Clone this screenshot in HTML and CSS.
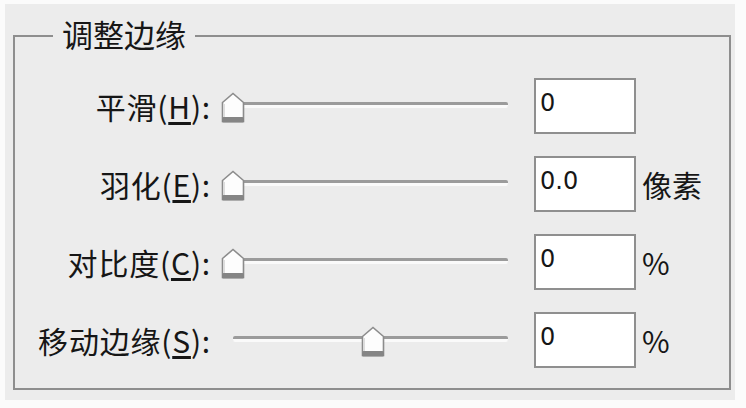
FILE: index.html
```html
<!DOCTYPE html>
<html lang="zh-CN">
<head>
<meta charset="utf-8">
<title>调整边缘</title>
<link rel="stylesheet" href="styles.css">
</head>
<body>
<div class="dialog">
  <fieldset class="group">
    <legend class="group-title">调整边缘</legend>
    <div class="rows">
      <div class="row">
        <label class="label">平滑(<u>H</u>):</label>
        <div class="slider">
          <div class="rail">
            <div class="track"></div>
            <svg class="thumb" style="left:0%" width="24" height="31" viewBox="0 0 24 31"><path d="M1.5 10.5 L12 1.5 L22.5 10.5 L22.5 29.5 L1.5 29.5 Z" fill="#fdfdfd" stroke="#8c8c8c" stroke-width="1.6"/><path d="M3.2 12 L3.2 25" stroke="#dcdcdc" stroke-width="1.5"/><rect x="1" y="25" width="22" height="5.5" rx="1.5" fill="#858585"/></svg>
          </div>
        </div>
        <div class="field">0</div>
        <span class="unit"></span>
      </div>
      <div class="row">
        <label class="label">羽化(<u>E</u>):</label>
        <div class="slider">
          <div class="rail">
            <div class="track"></div>
            <svg class="thumb" style="left:0%" width="24" height="31" viewBox="0 0 24 31"><path d="M1.5 10.5 L12 1.5 L22.5 10.5 L22.5 29.5 L1.5 29.5 Z" fill="#fdfdfd" stroke="#8c8c8c" stroke-width="1.6"/><path d="M3.2 12 L3.2 25" stroke="#dcdcdc" stroke-width="1.5"/><rect x="1" y="25" width="22" height="5.5" rx="1.5" fill="#858585"/></svg>
          </div>
        </div>
        <div class="field">0.0</div>
        <span class="unit">像素</span>
      </div>
      <div class="row">
        <label class="label">对比度(<u>C</u>):</label>
        <div class="slider">
          <div class="rail">
            <div class="track"></div>
            <svg class="thumb" style="left:0%" width="24" height="31" viewBox="0 0 24 31"><path d="M1.5 10.5 L12 1.5 L22.5 10.5 L22.5 29.5 L1.5 29.5 Z" fill="#fdfdfd" stroke="#8c8c8c" stroke-width="1.6"/><path d="M3.2 12 L3.2 25" stroke="#dcdcdc" stroke-width="1.5"/><rect x="1" y="25" width="22" height="5.5" rx="1.5" fill="#858585"/></svg>
          </div>
        </div>
        <div class="field">0</div>
        <span class="unit">%</span>
      </div>
      <div class="row">
        <label class="label">移动边缘(<u>S</u>):</label>
        <div class="slider">
          <div class="rail">
            <div class="track"></div>
            <svg class="thumb" style="left:51%" width="24" height="31" viewBox="0 0 24 31"><path d="M1.5 10.5 L12 1.5 L22.5 10.5 L22.5 29.5 L1.5 29.5 Z" fill="#fdfdfd" stroke="#8c8c8c" stroke-width="1.6"/><path d="M3.2 12 L3.2 25" stroke="#dcdcdc" stroke-width="1.5"/><rect x="1" y="25" width="22" height="5.5" rx="1.5" fill="#858585"/></svg>
          </div>
        </div>
        <div class="field">0</div>
        <span class="unit">%</span>
      </div>
    </div>
  </fieldset>
</div>
</body>
</html>
```

FILE: styles.css
```css
html, body {
  margin: 0;
  padding: 0;
  background: #fbfbfb;
}

body {
  padding: 4px 11px 8px 5px;
  font-family: "Noto Sans CJK SC", "Noto Sans", sans-serif;
  color: #161616;
}

.dialog {
  background: #ececec;
  height: 396px;
  padding: 12px 4px 0 8px;
  box-sizing: border-box;
}

.group {
  margin: 0;
  padding: 22px 0 0 0;
  border: 2px solid #8e8e8e;
  height: 374px;
  box-sizing: border-box;
  min-width: 0;
}

.group-title {
  margin-left: 38px;
  padding: 0 9px;
  font-size: 31px;
  line-height: 40px;
  position: relative;
  top: -2px;
}

.rows {
  display: flex;
  flex-direction: column;
  gap: 22px;
}

.row {
  display: flex;
  align-items: center;
  height: 56px;
}

.label {
  width: 196px;
  text-align: right;
  font-size: 30px;
  line-height: 36px;
  white-space: nowrap;
  letter-spacing: 0.8px;
}

.label u {
  text-underline-offset: 3px;
}

.slider {
  width: 288px;
  margin-left: 11px;
  padding: 0 2px 0 11px;
  box-sizing: border-box;
  height: 36px;
  display: flex;
}

.rail {
  position: relative;
  flex: 1;
}

.track {
  position: absolute;
  left: 0;
  right: 0;
  top: 14px;
  height: 3px;
  background: #9b9b9b;
  border-bottom: 3px solid #fafafa;
  border-radius: 2px;
}

.thumb {
  position: absolute;
  top: 4px;
  transform: translateX(-50%);
  display: block;
}

.field {
  width: 102px;
  height: 56px;
  margin-left: 24px;
  box-sizing: border-box;
  border: 2px solid #8f8f8f;
  background: #fff;
  font-family: "DejaVu Sans", sans-serif;
  font-size: 24px;
  line-height: 46px;
  padding-left: 4px;
}

.unit {
  margin-left: 6px;
  font-size: 30px;
}
```
